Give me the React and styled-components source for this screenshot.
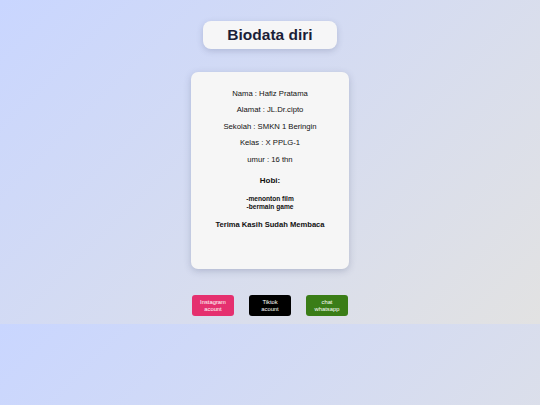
import React from 'react'
import styled, { createGlobalStyle } from 'styled-components'

const GlobalStyle = createGlobalStyle`
  body {
    margin: 0;
    font-family: "Liberation Sans", Arial, sans-serif;
    background: linear-gradient(135deg, #c9d6ff, #e2e2e2);
  }
`

const Page = styled.div`
  display: flex;
  flex-direction: column;
  align-items: center;
  padding: 21px 0 8px;
`

const TitleBox = styled.div`
  width: 134px;
  height: 28px;
  display: flex;
  align-items: center;
  justify-content: center;
  background: #f6f6f7;
  border-radius: 8px;
  box-shadow: 0 2px 6px rgba(60, 70, 110, 0.22);
  h1 {
    margin: 0;
    font-size: 15.5px;
    font-weight: 700;
    color: #1b1e38;
  }
`

const Card = styled.div`
  margin-top: 23px;
  width: 158px;
  height: 197px;
  box-sizing: border-box;
  padding-top: 16.5px;
  background: #f6f6f6;
  border-radius: 7px;
  box-shadow: 0 2px 7px rgba(60, 70, 110, 0.25);
  display: flex;
  flex-direction: column;
  align-items: center;
  text-align: center;
  color: #111;
`

const Line = styled.p`
  margin: 0 0 7.5px;
  font-size: 7.7px;
  line-height: 9px;
`

const Heading = styled.h3`
  margin: 5px 0 9px;
  font-size: 8px;
  line-height: 10px;
  font-weight: 700;
`

const List = styled.p`
  margin: 0 0 8.5px;
  font-size: 6.6px;
  line-height: 8px;
  font-weight: 700;
`

const Thanks = styled.h4`
  margin: 0;
  font-size: 7.6px;
  line-height: 9px;
  font-weight: 700;
`

const Buttons = styled.div`
  margin-top: 26px;
  display: flex;
  gap: 15px;
`

const Btn = styled.button`
  width: 42px;
  height: 21px;
  padding: 0;
  border: none;
  border-radius: 3px;
  background: ${p => p.$bg};
  color: #fff;
  font-family: "Liberation Sans", Arial, sans-serif;
  font-size: 5.8px;
  line-height: 7px;
  cursor: pointer;
`

export default function App() {
  return (
    <>
      <GlobalStyle />
      <Page>
        <TitleBox>
          <h1>Biodata diri</h1>
        </TitleBox>
        <Card>
          <Line>Nama : Hafiz Pratama</Line>
          <Line>Alamat : JL.Dr.cipto</Line>
          <Line>Sekolah : SMKN 1 Beringin</Line>
          <Line>Kelas : X PPLG-1</Line>
          <Line>umur : 16 thn</Line>
          <Heading>Hobi:</Heading>
          <List>-menonton film<br />-bermain game</List>
          <Thanks>Terima Kasih Sudah Membaca</Thanks>
        </Card>
        <Buttons>
          <Btn $bg="#e5306f">Instagram<br />acount</Btn>
          <Btn $bg="#000">Tiktok<br />acount</Btn>
          <Btn $bg="#3a7d17">chat<br />whatsapp</Btn>
        </Buttons>
      </Page>
    </>
  )
}
